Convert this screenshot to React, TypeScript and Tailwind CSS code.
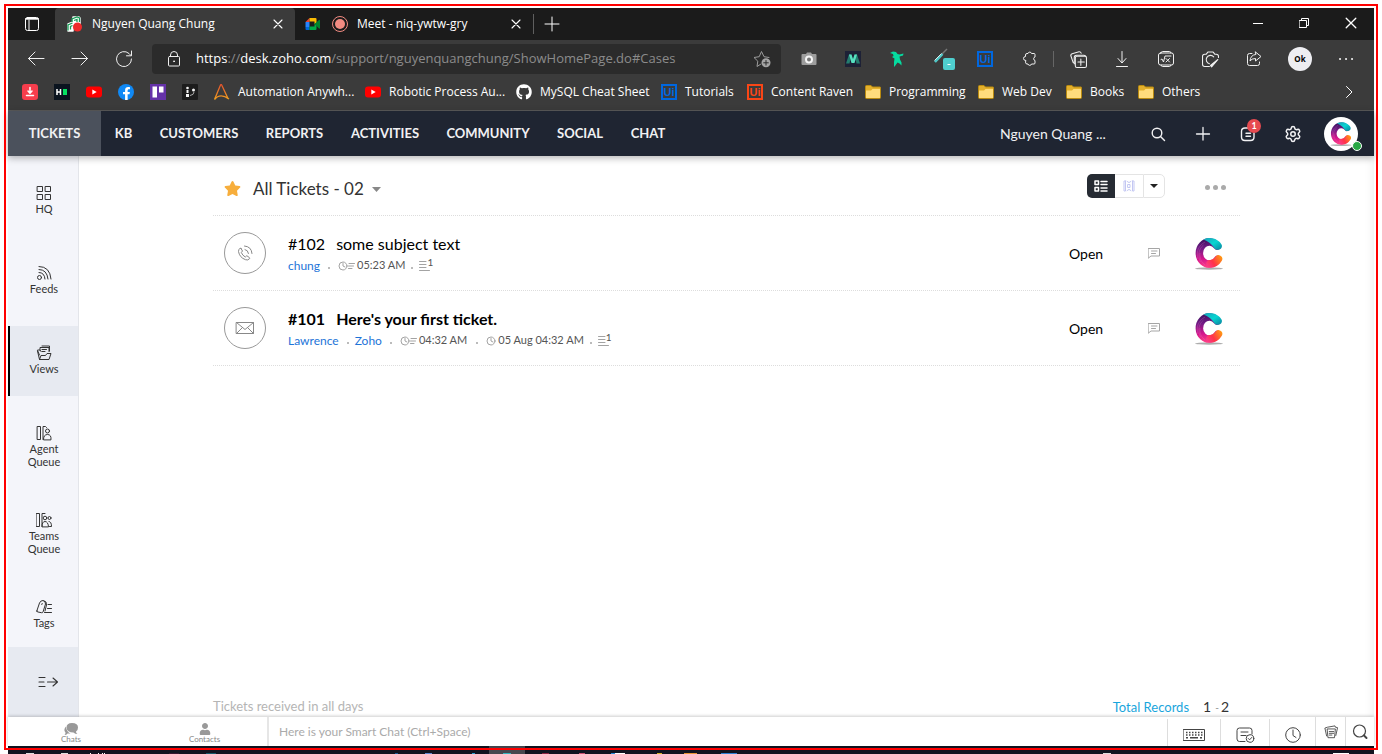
import React, { useId } from "react";
import { FaFacebookF, FaGithub, FaStar, FaUser } from "react-icons/fa";
import { Settings } from "lucide-react";

type SvgProps = { children: React.ReactNode; size?: number; w?: number; className?: string; box?: string; sw?: number };

function Line({ children, size = 16, w, className = "", box = "0 0 16 16", sw = 1 }: SvgProps) {
  return (
    <svg
      width={w ?? size}
      height={size}
      viewBox={box}
      fill="none"
      stroke="currentColor"
      strokeWidth={sw}
      strokeLinecap="round"
      strokeLinejoin="round"
      className={"shrink-0 " + className}
      aria-hidden="true"
    >
      {children}
    </svg>
  );
}

function SwirlLogo({ className }: { className: string }) {
  const id = useId();
  return (
    <svg viewBox="0 0 32 36" className={className} aria-hidden="true">
      <defs>
        <linearGradient id={id + "a"} gradientUnits="userSpaceOnUse" x1="14" y1="3" x2="16" y2="32">
          <stop offset="0" stopColor="#34105c" />
          <stop offset="0.35" stopColor="#741c86" />
          <stop offset="0.7" stopColor="#d3158c" />
          <stop offset="1" stopColor="#ff3f86" />
        </linearGradient>
        <linearGradient id={id + "b"} x1="0" y1="0" x2="1" y2="1">
          <stop offset="0" stopColor="#1a9fb8" />
          <stop offset="0.5" stopColor="#08d5d2" />
          <stop offset="1" stopColor="#0a829d" />
        </linearGradient>
        <linearGradient id={id + "c"} gradientUnits="userSpaceOnUse" x1="14" y1="30" x2="28" y2="21">
          <stop offset="0" stopColor="#fb3a86" />
          <stop offset="0.4" stopColor="#ff3348" />
          <stop offset="1" stopColor="#ff9a12" />
        </linearGradient>
      </defs>
      <ellipse cx="16" cy="33.500" rx="14" ry="1.200" fill="#777" opacity="0.6" />
      <path d="M24.500 24.500A10 11 0 1 1 24 11" fill="none" stroke={`url(#${id}a)`} strokeWidth="7.500" strokeLinecap="round" />
      <path d="M17 28.800A10 11 0 0 0 25.500 24" fill="none" stroke={`url(#${id}c)`} strokeWidth="7.500" strokeLinecap="round" />
      <path d="M10.500 4.500C17 1 26 4 28.800 10 29.600 13.500 26.500 15.500 23 14.500 20.500 13.500 20 8 10.500 4.500z" fill={`url(#${id}b)`} />
      <path d="M5 24c-2-7 0-13 7-17M7.500 27c-3-6-2-13 3-17M12 30c-4-3-5.500-7-5-12" stroke="#f08ad0" strokeWidth="0.6" fill="none" opacity="0.4" />
    </svg>
  );
}

function UiMark({ className }: { className: string }) {
  return (
    <span className={"flex size-4 shrink-0 items-center justify-center border-2 font-['Liberation_Sans'] text-[11px] leading-none font-bold " + className}>
      Ui
    </span>
  );
}

function Folder() {
  return (
    <svg width="16" height="16" viewBox="0 0 16 16" className="shrink-0" aria-hidden="true">
      <path d="M0.500 2.500q0-1 1-1h4.500l1.500 1.500h7.500q.5 0 .5 .5v10q0 1-1 1h-13q-1 0-1-1z" fill="#e3b02c" stroke="#b98a10" />
      <path d="M1 6.500h5L7.500 5H15v8.500q0 .5-.5 .5h-13q-.5 0-.5-.5z" fill="#ffdc7c" />
    </svg>
  );
}

function Youtube() {
  return (
    <svg width="16" height="16" viewBox="0 0 16 16" className="shrink-0" aria-hidden="true">
      <rect y="2.500" width="16" height="11" rx="3" fill="#f00" />
      <path d="M6.300 5.500v5l4.400-2.500z" fill="#fff" />
    </svg>
  );
}

function Cross({ size = 10 }: { size?: number }) {
  return (
    <Line size={size} box="0 0 10 10" sw={1.1}>
      <path d="M1 1l8 8M9 1l-8 8" />
    </Line>
  );
}

function TabStrip() {
  return (
    <div className="flex h-8 bg-[#1b1b1b] text-white">
      <button aria-label="Tab actions" className="flex w-[47px] items-center justify-center">
        <Line>
          <rect x="1.500" y="1.500" width="13" height="13" rx="2" />
          <path d="M1.500 3.200h13M2 2.500h12M5 4v10" />
        </Line>
      </button>
      <div className="flex w-[240px] items-center rounded-t bg-[#3b3b3b] pr-2.5 pl-3 text-xs">
        <svg width="16" height="16" viewBox="0 0 16 16" className="mr-[9px] shrink-0" aria-hidden="true">
          <path d="M6 1h6l1 1v6H6zM1 8l5-2v9H1z" fill="#fff" stroke="#fff" strokeWidth="1.500" strokeLinejoin="round" />
          <path d="M5 6V3l5-2 2.500 1v4M7 4.500L10 3.500V6M1 14.500V9l4.500-2M3.500 13.500V10.500L5.500 9.500" fill="none" stroke="#169c56" strokeWidth="1.300" />
          <circle cx="10.500" cy="11" r="4.500" fill="#ee2b2b" />
        </svg>
        <span className="flex-1 whitespace-nowrap">Nguyen Quang Chung</span>
        <button aria-label="Close tab" className="flex w-3.5 justify-center"><Cross /></button>
      </div>
      <div className="flex w-[238px] items-center px-2.5 text-xs">
        <svg width="16" height="16" viewBox="0 0 15 16" className="mr-2.5 shrink-0" aria-hidden="true">
          <path d="M0 6l4-4v4z" fill="#ea4335" />
          <path d="M4 2h6q1 0 1 1v4l-2 1V5.500H4z" fill="#fbbc04" />
          <path d="M0 6h4v5H0z" fill="#2684fc" />
          <path d="M0 11h4v3H1q-1 0-1-1z" fill="#0066da" />
          <path d="M4 10.500h5V8l2 1v4q0 1-1 1H4z" fill="#00ac47" />
          <path d="M9 8l4.500-4q1-.5 1 .5v7.500q0 1-1 .5z" fill="#00832d" />
        </svg>
        <svg width="18" height="18" viewBox="0 0 18 18" className="mr-2 shrink-0" aria-hidden="true">
          <circle cx="9" cy="9" r="7.500" fill="none" stroke="#f28b82" />
          <circle cx="9" cy="9" r="5" fill="#f28b82" />
        </svg>
        <span className="flex-1 whitespace-nowrap">Meet - niq-ywtw-gry</span>
        <button aria-label="Close tab" className="flex w-3.5 justify-center"><Cross /></button>
      </div>
      <span className="my-1.5 w-px bg-[#5f5f5f]" />
      <button aria-label="New tab" className="flex w-9 items-center justify-center">
        <Line><path d="M8 1v14M1 8h14" /></Line>
      </button>
      <div className="ml-auto flex h-[29px]">
        <button aria-label="Minimize" className="flex w-[46px] items-center justify-center">
          <Line size={10} box="0 0 10 10"><path d="M0 5.500h10" /></Line>
        </button>
        <button aria-label="Restore" className="flex w-[46px] items-center justify-center">
          <Line size={10} box="0 0 10 10"><path d="M.5 2.500h7v7h-7zM2.500 2.500V.5h7v7h-2" /></Line>
        </button>
        <button aria-label="Close window" className="flex w-[47px] items-center justify-center"><Cross size={12} /></button>
      </div>
    </div>
  );
}

function Tool({ label, children }: { label: string; children: React.ReactNode }) {
  return (
    <button aria-label={label} className="flex w-11 shrink-0 items-center justify-center">
      {children}
    </button>
  );
}

function Toolbar() {
  return (
    <div className="flex h-[38px] items-center px-1.5 text-[#f0f0f0]">
      <Tool label="Back"><Line size={18} box="0 0 18 18"><path d="M17 8.500H1.500M8 2L1.500 8.500 8 15" /></Line></Tool>
      <Tool label="Forward"><Line size={18} box="0 0 18 18"><path d="M1 8.500h15.500M10 2l6.500 6.500-6.500 6.500" /></Line></Tool>
      <Tool label="Reload"><Line size={18} box="0 0 18 18"><path d="M16.500 9A7.500 7.500 0 1 1 14 3.500L16 5.500M16.500 1v4.800H11.500" /></Line></Tool>
      <label className="mx-1.5 flex h-[30px] min-w-0 flex-1 items-center rounded bg-[#2b2b2b] pr-2.5 pl-3.5">
        <Line><path d="M4.500 5.500V4a3.500 3.500 0 0 1 7 0v1.500" /><rect x="2.500" y="5.500" width="11" height="9.500" rx="1" /><circle cx="8" cy="10.300" r=".5" fill="currentColor" /></Line>
        <a href="#Cases" className="ml-3.5 flex-1 truncate text-[13px] text-[#8b8b8b]">
          <span className="text-white">https</span>://<span className="text-white">desk.zoho.com</span>/support/nguyenquangchung/ShowHomePage.do#Cases
        </a>
        <Line size={18} box="0 0 18 18" className="text-[#9c9c9c]">
          <path d="M8 14l-4 2.500.8-5.300L1 7.500l5.200-.8L8.500 1.500l2.500 5.200 5 .8" />
          <circle cx="13" cy="12.800" r="4.500" fill="#a5a5a5" stroke="none" />
          <path d="M13 10.500v4.600M10.700 12.800h4.600" stroke="#2b2b2b" />
        </Line>
      </label>
      <Tool label="Screenshot">
        <svg width="16" height="16" viewBox="0 0 16 16"><path d="M5 3l1-1.500h4L11 3h3.500q1 0 1 1v9q0 1-1 1h-13q-1 0-1-1V4q0-1 1-1z" fill="#9d9d9d" /><circle cx="8" cy="8.500" r="3" fill="#777" stroke="#f5f5f5" strokeWidth="2" /></svg>
      </Tool>
      <Tool label="Extension M">
        <svg width="16" height="16" viewBox="0 0 16 16"><path d="M0 0h16v16H0z" fill="#1d2136" /><path d="M1 12.500L4 3.500h2.500L4.500 12.500zM15 12.500L12 3.500H9.500l2 9z" fill="#237d6f" /><path d="M4 3.500h2.500L8 8l1.500-4.500H12L9.500 12h-3z" fill="#56e0c0" /></svg>
      </Tool>
      <Tool label="Bird extension">
        <svg width="16" height="16" viewBox="0 0 16 16"><path d="M1 2l3-1.500 3 .5 1.500 2 2 .5 4-1-.5 2-3.500 1 .5 3 1.500 3v3l-2-2-2-1-2.500 3.500-1 1L5 11l.5-3.500L3 6l1.500-1L4 3z" fill="#05dca0" /></svg>
      </Tool>
      <Tool label="Picker extension">
        <svg width="22" height="24" viewBox="0 0 22 24" className="ml-1.5"><path d="M14 2L9 7" stroke="#777" strokeWidth="1.500" /><path d="M9.500 7L2 15" stroke="#4fc8c8" strokeWidth="2.500" /><path d="M8.500 6.500L1.500 13.500" stroke="#d9eaea" /><rect x="10" y="11" width="12" height="12" rx="2" fill="#4fcfcf" /><path d="M14.500 17.500h3" stroke="#fff" /></svg>
      </Tool>
      <Tool label="UiPath"><UiMark className="border-[#0067df] text-[#0067df]" /></Tool>
      <Tool label="Extensions"><Line className="-scale-x-100 rotate-180"><path d="M4.500 4.500q0-1.500 1.500-1.500h1a1.800 1.800 0 0 1 3.500 0h2.500q1 0 1 1v2.500a1.800 1.800 0 0 0 0 3.500v2.500q0 1-1 1h-2.500a1.800 1.800 0 0 1-3.500 0h-1q-1.500 0-1.500-1.500v-1.500a1.900 1.900 0 0 1 0-4z" /></Line></Tool>
      <span className="mx-0.5 h-4 w-px shrink-0 bg-[#666]" />
      <Tool label="Collections"><Line size={17}><path d="M3 11L.8 4.500Q.5 3 2 2.500L8.500.7Q10 .5 10.500 2M5 12H4V6q0-2 2-2h7q2 0 2 2" /><rect x="5" y="5" width="10.500" height="10.500" rx="1.500" fill="#3b3b3b" /><path d="M10.200 7.500v6M7.500 10.300h6" /></Line></Tool>
      <Tool label="Downloads"><Line><path d="M8 .5v11M4 7.500l4 4.500 4-4.500M2.500 15.500h11" /></Line></Tool>
      <Tool label="Math solver"><Line><rect x=".5" y="2" width="15" height="12" rx="2" /><path d="M3 2q0-1.500 1.500-1.500h7Q13 .5 13 2M3 14q0 1.500 1.500 1.500h7Q13 15.500 13 14M3 8.500l1-.5 1.500 3L7 5h6M8 7.500l3.500 3.500M11.500 7.500L8 11" /></Line></Tool>
      <Tool label="Web capture"><Line size={17}><path d="M7 14.500H2.500q-2 0-2-2V5q0-2 2-2H4l1.500-2h5L12 3h1.500q2 0 2 2v1M11 5.500A4 4 0 1 0 7 12" /><path d="M15 8l-6 7-1-1.500z" fill="currentColor" /></Line></Tool>
      <Tool label="Share"><Line><path d="M6 2.500H3.500q-2 0-2 2v8q0 2 2 2h8q2 0 2-2V11M9.500 1l5.500 4.500-5.500 4.500V7.500q-4 0-5.500 2.500Q4.500 4 9.500 3.500z" /></Line></Tool>
      <button aria-label="Profile" className="mx-3 flex size-6 shrink-0 items-center justify-center rounded-full bg-[#eeeef2] text-[8px] font-bold text-black">Ok</button>
      <Tool label="Menu"><Line sw={2}><path d="M2 8h.1M8 8h.1M14 8h.1" /></Line></Tool>
    </div>
  );
}

function Bookmark({ width, label, children }: { width: string; label: string; children: React.ReactNode }) {
  return (
    <a href="#bookmark" className={"flex shrink-0 items-center gap-2 whitespace-nowrap " + width}>
      {children}
      <span>{label}</span>
    </a>
  );
}

function BookmarksBar() {
  return (
    <div className="border-b border-[#5a5a5a] pb-1">
      <div className="flex h-7 items-center gap-4 pr-[19px] pl-3.5 text-xs text-white">
        <a href="#downloads" aria-label="Downloader" className="flex size-4 shrink-0 items-center justify-center rounded-[3px] bg-[#f63d4c]">
          <Line size={12} box="0 0 12 12" sw={1.5}><path d="M6 1.500v5M4 5l2 2.300L8 5M2.500 9.500h7" /></Line>
        </a>
        <a href="#hackerrank" aria-label="HackerRank" className="flex size-4 shrink-0 items-center justify-center bg-[#0b141f]">
          <svg width="12" height="6" viewBox="0 0 12 6"><path d="M1 0v6M4.500 0v6M1 3h3.500" stroke="#fff" strokeWidth="1.500" /><path d="M7 0h4v6H7z" fill="#06e161" /></svg>
        </a>
        <a href="#youtube" aria-label="YouTube" className="shrink-0"><Youtube /></a>
        <a href="#facebook" aria-label="Facebook" className="flex size-4 shrink-0 items-end justify-center rounded-full bg-[#1089f5]"><FaFacebookF size={13} /></a>
        <a href="#trello" aria-label="Trello" className="shrink-0">
          <svg width="16" height="16" viewBox="0 0 16 16"><path d="M0 0h16v16H0z" fill="#6532a8" /><path d="M2.500 2.500h4.500v11H2.500zM9 2.500h4.500v6H9z" fill="#fff" /></svg>
        </a>
        <a href="#dev" aria-label="Dev" className="shrink-0">
          <svg width="16" height="16" viewBox="0 0 16 16"><rect width="16" height="16" rx="1" fill="#1c1c1c" /><g fill="#f4f4f4"><circle cx="5.500" cy="4" r="1.300" /><rect x="4.500" y="6" width="2" height="3" /><rect x="4" y="10" width="3" height="3" /><circle cx="11.500" cy="6" r="1.500" /></g><path d="M12 8q0 3-4 3.500" stroke="#aaa" fill="none" /></svg>
        </a>
        <Bookmark width="w-[135px]" label="Automation Anywh...">
          <svg width="16" height="16" viewBox="0 0 16 16" className="shrink-0"><defs><linearGradient id="aa" x1="0" y1="0" x2="0" y2="1"><stop offset="0" stopColor="#e5532d" /><stop offset="1" stopColor="#f0a020" /></linearGradient></defs><path d="M.5 15.500L6.500 1q.6-1 1.200 0L14 14.500M.5 15.500Q6 8.500 15 15" stroke="url(#aa)" strokeWidth="1.300" fill="none" /></svg>
        </Bookmark>
        <Bookmark width="w-[135px]" label="Robotic Process Au..."><Youtube /></Bookmark>
        <Bookmark width="w-[129px]" label="MySQL Cheat Sheet"><FaGithub size={16} className="shrink-0" /></Bookmark>
        <Bookmark width="w-[70px]" label="Tutorials"><UiMark className="border-[#0067df] text-[#0067df]" /></Bookmark>
        <Bookmark width="w-[102px]" label="Content Raven"><UiMark className="border-[#fa4616] text-[#fa4616]" /></Bookmark>
        <Bookmark width="w-[97px]" label="Programming"><Folder /></Bookmark>
        <Bookmark width="w-[72px]" label="Web Dev"><Folder /></Bookmark>
        <Bookmark width="w-[56px]" label="Books"><Folder /></Bookmark>
        <Bookmark width="w-[60px]" label="Others"><Folder /></Bookmark>
        <button aria-label="More bookmarks" className="ml-auto"><Line size={12} w={12} box="0 0 12 12"><path d="M3.500 .5L9 6l-5.500 5.500" /></Line></button>
      </div>
    </div>
  );
}

const navItems = [
  { label: "TICKETS", cls: "w-[93px] bg-[#4b515c]" },
  { label: "KB", cls: "w-[45px]" },
  { label: "CUSTOMERS", cls: "w-[106px]" },
  { label: "REPORTS", cls: "w-[85px]" },
  { label: "ACTIVITIES", cls: "w-[96px]" },
  { label: "COMMUNITY", cls: "w-[110px]" },
  { label: "SOCIAL", cls: "w-[74px]" },
  { label: "CHAT", cls: "w-[62px]" },
];

function AppNav() {
  return (
    <header className="z-10 flex h-[45px] items-stretch bg-[#1f2532] text-[#f1f1f3] shadow-[0_2px_7px_rgba(0,0,0,0.3)]">
      <nav className="flex text-[13px] font-bold">
        {navItems.map((n) => (
          <a key={n.label} href={"#" + n.label} className={"flex items-center justify-center " + n.cls}>{n.label}</a>
        ))}
      </nav>
      <div className="ml-auto flex items-center">
        <span className="w-[135px] text-[14px]">Nguyen Quang ...</span>
        <button aria-label="Search" className="flex w-[45px] justify-center"><Line sw={1.4}><circle cx="7" cy="7" r="4.800" /><path d="M10.500 10.500l4 4" /></Line></button>
        <button aria-label="Add" className="flex w-[45px] justify-center"><Line sw={1.3}><path d="M8 1.500v12.500M1.500 8h13" /></Line></button>
        <button aria-label="Notifications" className="relative flex w-[45px] justify-center">
          <Line sw={1.4}><path d="M9 2H5q-3.500 0-3.500 3.500v5.500q0 3.500 3.500 3.500h5.500q3.500 0 3.500-3.500V7M6 7.200h4.500M6 10.300h4.500" /></Line>
          <span className="absolute -top-[7px] left-[22px] flex size-3.5 items-center justify-center rounded-full bg-[#e64a50] text-[9px] font-bold text-white">1</span>
        </button>
        <button aria-label="Settings" className="flex w-[45px] justify-center"><Settings size={18} strokeWidth={2} /></button>
        <button aria-label="My account" className="relative mr-4 ml-[9px] flex size-[34px] items-center justify-center rounded-full bg-white">
          <SwirlLogo className="h-[27px] w-6" />
          <span className="absolute -right-1 bottom-0 size-2.5 rounded-full border border-white bg-[#28a745]" />
        </button>
      </div>
    </header>
  );
}

const sideItems: { label: string; icon: React.ReactNode; active?: boolean }[] = [
  { label: "HQ", icon: <Line><path d="M1.500 1.500h5v5h-5zM9.500 1.500h5v5h-5zM1.500 9.500h5v5h-5zM9.500 9.500h5v5h-5z" /></Line> },
  { label: "Feeds", icon: <Line><circle cx="3.500" cy="12.500" r="2" /><path d="M3 7.500q5.500 0 6 6.500M3 4.500q8 0 9 9.500M3 1.500q11 0 12 12.500" /></Line> },
  { label: "Views", active: true, icon: <Line><path d="M3.500 10l-2-4.500V5H4l1 1.500M4 5V2.500h9v4M6 1h7.500v5M6 4.500h4.500M6 6.500h3M1.500 6l2 8.500h9.500l2-6h-4l-1.500 2H5l-1.500 4" /></Line> },
  { label: "Agent Queue", icon: <Line><path d="M1.500 1.500h3v13h-3zM7 14.500V1.500h2.500l1 1" /><circle cx="11.500" cy="6" r="2" /><path d="M7.500 14.500q0-5 4-5t3.500 5z" /></Line> },
  { label: "Teams Queue", icon: <Line><path d="M.5 1.500h3v13h-3zM6 14.500V1.500h3" /><circle cx="9" cy="6" r="1.800" /><circle cx="13.500" cy="6" r="1.500" /><path d="M6 14.500q0-5 3-5t3.500 5zM13 9.500q2.500 0 2.500 5h-2" /></Line> },
  { label: "Tags", icon: <Line><path d="M.8 12L3.500 4Q4.500 1.500 7 1.500T9.500 5L7 13q-.4 1-1.500.7L2 13Q.5 12.700.8 12zM8 2q3 0 2.500 4L9 12M5.800 5.500l.4-1M12 5.500h3.500M11.500 9.500h4M8.500 13.500h7" /></Line> },
];

function Sidebar() {
  return (
    <aside className="flex w-[71px] shrink-0 flex-col border-r border-[#e3e5ea] bg-[#f4f5fa] text-[#333]">
      <nav className="flex min-h-0 flex-1 flex-col gap-2.5 overflow-hidden pt-2.5">
        {sideItems.map((s) => (
          <a
            key={s.label}
            href={"#" + s.label}
            className={
              "flex min-h-[70px] shrink-0 flex-col items-center border-l-2 px-3 pt-[19px] pb-[15px] text-center text-[11px] leading-[13px] " +
              (s.active ? "border-black bg-[#e7eaf1]" : "border-transparent")
            }
          >
            {s.icon}
            <span className="mt-px">{s.label}</span>
          </a>
        ))}
      </nav>
      <button aria-label="Expand sidebar" className="flex h-[70px] shrink-0 items-center justify-center bg-[#e7eaf1] pl-2.5">
        <Line size={12} w={20} box="0 0 20 12" sw={1.1}><path d="M1 1.500h6M1 6h5M1 10.500h6M9.500 6h10M15 2l4.500 4-4.500 4" /></Line>
      </button>
    </aside>
  );
}

function ClockLines() {
  return (
    <Line size={10} w={17} box="0 0 17 10" className="mr-0.5 text-[#999]" sw={0.9}>
      <circle cx="5" cy="5" r="4" /><path d="M5 2.500V5l2 1M11 2.500h5.500M10.500 5h5M10.500 7.500h3.500" />
    </Line>
  );
}

function Clock() {
  return (
    <Line size={10} w={10} box="0 0 10 10" className="mr-0.5 text-[#999]" sw={0.9}>
      <circle cx="5" cy="5" r="4" /><path d="M5 2.500V5l2 1" />
    </Line>
  );
}

function Dot({ className }: { className: string }) {
  return <span className={"mt-1 size-0.5 shrink-0 bg-[#bbb] " + className} />;
}

function Threads() {
  return (
    <span className="flex items-center text-[#555]">
      <Line size={10} w={11} box="0 0 11 10" className="text-[#999]" sw={0.9}><path d="M.5 .5H7M.5 3.500h6.500M.5 6.500H7M.5 9.500h10" /></Line>
      <span className="-mt-1.5 -ml-[3px] text-[10px]">1</span>
    </span>
  );
}

function TicketRow({ id, subject, bold, icon, children }: { id: string; subject: string; bold?: boolean; icon: React.ReactNode; children: React.ReactNode }) {
  return (
    <li className="flex h-[75px] items-center border-b border-dotted border-[#ddd] pr-[15px] pl-[11px]">
      <span className="flex size-[42px] shrink-0 items-center justify-center rounded-full border border-[#999] text-[#888]">{icon}</span>
      <div className="ml-[22px] flex-1 pt-0.5">
        <a href={"#" + id} className={"flex gap-[11px] text-[16px] leading-5 text-black " + (bold ? "font-bold" : "")}>
          <span>{id}</span>
          <span>{subject}</span>
        </a>
        <div className="mt-[3px] flex h-[18px] items-center text-[11px] text-[#555]">{children}</div>
      </div>
      <span className="w-[79px] text-[14px] text-black">Open</span>
      <button aria-label="Comments" className="flex w-[45px] text-[#a5a5a5]">
        <Line size={12} box="0 0 12 12"><path d="M.5 1.500h11v7.500H3L.5 11zM3.500 4h5.500M3.500 6.500h4" /></Line>
      </button>
      <SwirlLogo className="h-9 w-8 shrink-0" />
    </li>
  );
}

function Tickets() {
  return (
    <main className="flex min-w-0 flex-1 flex-col bg-white px-[134px] shadow-[inset_-10px_0_10px_-8px_rgba(0,0,0,0.06)]">
      <div className="flex h-[60px] shrink-0 items-center border-b border-dotted border-[#ddd] pt-px pl-[11px]">
        <div className="flex flex-1 items-center pt-1.5">
          <FaStar size={17} className="mb-0.5 text-[#f7ae3c]" />
          <h1 className="ml-3 text-[17px] leading-6 text-[#333]">All Tickets - 02</h1>
          <button aria-label="Choose view" className="ml-2"><svg width="9" height="5" viewBox="0 0 9 5"><path d="M0 0h9L4.500 5z" fill="#888" /></svg></button>
        </div>
        <div className="flex h-6 w-[78px] items-stretch">
          <button aria-label="List view" className="flex w-7 items-center justify-center rounded-l-[5px] bg-[#262b33] text-white">
            <Line size={12} w={14} box="0 0 14 12" sw={1.5}><path d="M1 1h3.500v3.500H1zM1 7.500h3.500V11H1zM7 1.500h6M7 4.500h6M7 8h6M7 11h6" /></Line>
          </button>
          <button aria-label="Handshake view" className="flex flex-1 items-center justify-center border-y border-[#e4e4e4] text-[#c3c7f2]">
            <Line size={12} box="0 0 12 12"><path d="M2.500 1H1v10h1.500V1M9.500 1H11v10H9.500V1M4 1.500q2 2.500 4 0M4 10.500q2-2.500 4 0M5 4.500h2v3H5z" /></Line>
          </button>
          <button aria-label="More layouts" className="flex w-[22px] items-center justify-center rounded-r-[5px] border border-[#e4e4e4]"><svg width="8" height="4" viewBox="0 0 8 4"><path d="M0 0h8L4 4z" fill="#222" /></svg></button>
        </div>
        <button aria-label="More actions" className="mt-0.5 mr-3.5 ml-10 flex gap-[3px]">
          <span className="size-[5px] rounded-full bg-[#aaa]" /><span className="size-[5px] rounded-full bg-[#aaa]" /><span className="size-[5px] rounded-full bg-[#aaa]" />
        </button>
      </div>
      <ul className="flex-1">
        <TicketRow
          id="#102"
          subject="some subject text"
          icon={<Line size={16}><path d="M4 3.500l1.500 2.500-1.200 1.500q1.200 3 4 4.500l1.500-1.300 2.700 2q.5.500 0 1-1.500 2-4 1Q2.500 12.500 1.500 6.500 1.500 4.500 3 3.200q.6-.5 1 .3zM8 4.500q3 .5 3.500 4M7.500 1Q14.500 1.500 15 8.500" /></Line>}
        >
          <a href="#chung" className="text-xs text-[#1d74d8]">chung</a>
          <Dot className="mr-2 ml-2" />
          <ClockLines />05:23 AM
          <Dot className="mx-1.5" />
          <Threads />
        </TicketRow>
        <TicketRow
          id="#101"
          subject="Here's your first ticket."
          bold
          icon={<Line size={14} w={20} box="0 0 20 14"><path d="M1.500 1.500h17v11h-17zM1.500 1.500l8.500 7 8.500-7M1.500 12.500l6-6M18.500 12.500l-6-6" /></Line>}
        >
          <a href="#lawrence" className="text-xs text-[#1d74d8]">Lawrence</a>
          <Dot className="mr-1.5 ml-2" />
          <a href="#zoho" className="text-xs text-[#1d74d8]">Zoho</a>
          <Dot className="mx-2" />
          <ClockLines />04:32 AM
          <Dot className="mr-2 ml-[9px]" />
          <Clock />05 Aug 04:32 AM
          <Dot className="mx-1.5" />
          <Threads />
        </TicketRow>
      </ul>
      <footer className="flex h-5 shrink-0 items-center justify-between pr-[11px] text-[13px] text-[#b5b5b5]">
        <span>Tickets received in all days</span>
        <span className="flex items-center leading-4 text-[#333]">
          <a href="#total" className="mr-3.5 text-[#19a5dc]">Total Records</a>
          <span className="text-[14px]">1</span><span className="mr-0.5 ml-1 text-[10px] text-[#888]">-</span><span className="text-[14px]">2</span>
        </span>
      </footer>
    </main>
  );
}

function ChatBar() {
  return (
    <div className="z-10 flex h-[29px] shrink-0 bg-white text-[#444] shadow-[0_-1px_3px_rgba(0,0,0,0.2)]">
      <button className="flex w-[126px] flex-col items-center justify-center pt-1 text-[8px] leading-[9px] text-[#888]">
        <svg width="14" height="12" viewBox="0 0 14 12" fill="#999"><path d="M8 0q6 0 6 4.500 0 3-2 4 0 1.500 1.500 2.500-2.500 0-4-1.500-6.500 0-7-5Q2.500 0 8 0z" /><path d="M2 3.500Q-1 7 1.500 9.500q0 1.500-1 2.500 2 0 3-1.500h3Q2.500 9 2 3.500z" /></svg>
        Chats
      </button>
      <button className="flex w-[135px] flex-col items-center justify-center border-r-2 border-[#e6e6e6] pt-1 pl-2 text-[8px] leading-[9px] text-[#888]">
        <FaUser size={12} className="text-[#999]" />
        Contacts
      </button>
      <input aria-label="Smart Chat" placeholder="Here is your Smart Chat (Ctrl+Space)" className="min-w-0 flex-1 pl-2.5 text-xs outline-none placeholder:text-[#aaa]" />
      <button aria-label="Keyboard shortcuts" className="mt-0.5 flex w-[53px] items-center justify-center border-l border-[#ddd] pt-1">
        <Line size={12} w={22} box="0 0 22 12"><path d="M.5 .5h21v11H.5z" /><path d="M3 3.500h17M3 6h17" strokeDasharray="1.500 1.500" strokeWidth="1.500" strokeLinecap="butt" /><path d="M3 8.800h2M7 8.800h8M17 8.800h2" strokeWidth="1.500" strokeLinecap="butt" /></Line>
      </button>
      <button aria-label="Tasks" className="mt-0.5 flex w-[49px] items-center justify-center border-l border-[#ddd] pt-1">
        <Line size={16} w={19} box="0 0 19 16"><path d="M9 14.500H3.500q-2.500 0-2.500-2.500V3.500Q1 1 3.500 1h10Q16 1 16 3.500V7M5 5h7M5 8.500h5" /><circle cx="14" cy="11.500" r="3.800" /><path d="M12.300 11.500l1.300 1.300 2.200-2.400" /></Line>
      </button>
      <button aria-label="History" className="mt-0.5 flex w-[46px] items-center justify-center border-l border-[#ddd] pt-1">
        <Line><circle cx="8" cy="8" r="7.300" /><path d="M8 3v5.500l3 2" /></Line>
      </button>
      <button aria-label="Notes" className="flex w-[30px] items-center justify-center border-l border-[#ddd]">
        <Line size={14}><path d="M4 4.500h9l-1 10H5zM3 12.500l-2-9 3-1 8.500-1.500.5 1.500 2.500.5-2 9M6 7.500h5M6 9.500h5M6 11.500h3" /></Line>
      </button>
      <button aria-label="Search all" className="flex w-[29px] items-center justify-center border-l border-[#ddd]">
        <Line sw={1.2}><circle cx="7.500" cy="7" r="6" /><path d="M12 11.500l2.500 2.500" strokeWidth="2" /></Line>
      </button>
    </div>
  );
}

const taskbarMarks: [number, number, string][] = [
  [18, 8, "#ddd"], [53, 7, "#ddd"], [82, 1, "#fff"], [90, 1, "#fff"], [94, 1, "#fff"], [96, 1, "#fff"],
  [161, 10, "#35152e"], [198, 10, "#145768"], [387, 3, "#1a5b96"], [417, 7, "#5f88d4"], [464, 3, "#2a9fd0"],
  [495, 8, "#34b4be"], [534, 7, "#8e2341"], [571, 6, "#c84c70"], [603, 4, "#2387d8"], [607, 10, "#fff"],
  [649, 5, "#d5b322"], [676, 13, "#e79331"], [713, 16, "#2c7fd4"], [1095, 8, "#ddd"], [1325, 16, "#fff"],
];

function Taskbar() {
  return (
    <div className="h-2 shrink-0 overflow-hidden bg-[#11131f]">
      <svg width="1366" height="8" viewBox="0 0 1366 8" className="max-w-none" aria-hidden="true">
        <path d="M481 0h36v8h-36z" fill="#46474f" />
        {taskbarMarks.map(([x, w, c]) => (
          <rect key={x} x={x} y="7" width={w} height="1" fill={c} />
        ))}
      </svg>
    </div>
  );
}

export default function App() {
  return (
    <div className="relative flex h-screen flex-col overflow-hidden bg-white px-2 pt-2 font-['Lato',sans-serif]">
      <div className="shrink-0 bg-[#3b3b3b] font-['Open_Sans',sans-serif]">
        <TabStrip />
        <Toolbar />
        <BookmarksBar />
      </div>
      <AppNav />
      <div className="flex min-h-0 flex-1">
        <Sidebar />
        <Tickets />
      </div>
      <ChatBar />
      <Taskbar />
      <div className="pointer-events-none absolute inset-1 z-20 border-2 border-[#f00]" />
    </div>
  );
}
